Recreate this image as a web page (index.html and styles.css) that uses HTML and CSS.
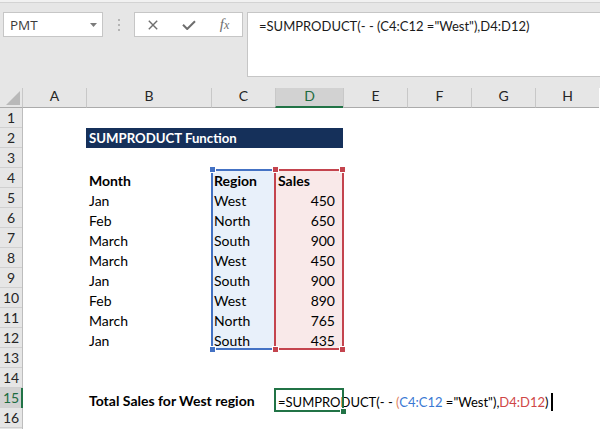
FILE: index.html
```html
<!DOCTYPE html>
<html>
<head>
<meta charset="utf-8">
<link rel="stylesheet" href="styles.css">
</head>
<body>
<div class="app">
  <div class="toolbar">
    <div class="namebox">
      <span class="nb-text">PMT</span>
      <svg class="nb-arrow" width="7" height="4" viewBox="0 0 7 4"><path d="M0 0h7L3.5 4z" fill="#7b7b7b"/></svg>
    </div>
    <div class="grip"><i></i><i></i><i></i></div>
    <div class="fxbox">
      <span class="slot s1"><svg width="10" height="10" viewBox="0 0 10 10"><path d="M0.8 0.8L9.2 9.2M9.2 0.8L0.8 9.2" stroke="#6e6e6e" stroke-width="1.4" fill="none"/></svg></span>
      <span class="slot s2"><svg width="14" height="10" viewBox="0 0 14 10"><path d="M1 4.8l4.2 4.2L13 1.2" fill="none" stroke="#6e6e6e" stroke-width="2"/></svg></span>
      <span class="slot s3"><span class="fx">f<small>x</small></span></span>
    </div>
    <div class="formula">=SUMPRODUCT(- - (C4:C12 ="West"),D4:D12)</div>
  </div>

  <div class="sheet">
    <div class="hdr">
      <div class="corner"><svg width="14" height="14" viewBox="0 0 14 14"><path d="M14 0V14H0z" fill="#b9b9b9"/></svg></div>
      <div>A</div><div>B</div><div>C</div><div class="sel">D</div><div>E</div><div>F</div><div>G</div><div>H</div>
    </div>

    <div class="range rb"><span class="hd tl"></span><span class="hd bl"></span></div>
    <div class="range rr"><span class="hd tl"></span><span class="hd tr"></span><span class="hd bl"></span><span class="hd br"></span></div>

    <div class="row"><div class="rh">1</div></div>
    <div class="row"><div class="rh">2</div><div class="cell title">SUMPRODUCT Function</div></div>
    <div class="row"><div class="rh">3</div></div>
    <div class="row"><div class="rh">4</div><div class="cell b bold">Month</div><div class="cell c bold">Region</div><div class="cell d bold">Sales</div></div>
    <div class="row"><div class="rh">5</div><div class="cell b">Jan</div><div class="cell c">West</div><div class="cell d num">450</div></div>
    <div class="row"><div class="rh">6</div><div class="cell b">Feb</div><div class="cell c">North</div><div class="cell d num">650</div></div>
    <div class="row"><div class="rh">7</div><div class="cell b">March</div><div class="cell c">South</div><div class="cell d num">900</div></div>
    <div class="row"><div class="rh">8</div><div class="cell b">March</div><div class="cell c">West</div><div class="cell d num">450</div></div>
    <div class="row"><div class="rh">9</div><div class="cell b">Jan</div><div class="cell c">South</div><div class="cell d num">900</div></div>
    <div class="row"><div class="rh">10</div><div class="cell b">Feb</div><div class="cell c">West</div><div class="cell d num">890</div></div>
    <div class="row"><div class="rh">11</div><div class="cell b">March</div><div class="cell c">North</div><div class="cell d num">765</div></div>
    <div class="row"><div class="rh">12</div><div class="cell b">Jan</div><div class="cell c">South</div><div class="cell d num">435</div></div>
    <div class="row"><div class="rh">13</div></div>
    <div class="row"><div class="rh">14</div></div>
    <div class="row"><div class="rh sel">15</div><div class="cell b bold">Total Sales for West region</div><div class="cell d active">=SUMPRODUCT(- - <span class="pk">(</span><span class="rf1">C4:C12</span> ="West"),<span class="rf2">D4:D12</span>)<span class="caret"></span></div></div>
    <div class="row"><div class="rh">16</div></div>
    <div class="row"><div class="rh"></div></div>
  </div>
</div>
</body>
</html>
```

FILE: styles.css
```css
* { box-sizing: border-box; }

body {
  margin: 0;
  width: 600px;
  height: 429px;
  overflow: hidden;
  background: #e6e6e6;
  font-family: Lato, "Liberation Sans", sans-serif;
}

.toolbar {
  height: 88px;
  display: flex;
  align-items: flex-start;
  padding: 12px 0 0 3px;
  background: linear-gradient(#f1f1f1 0 2px, #d3d3d3 2px 3px, #e6e6e6 3px);
}

.namebox {
  width: 100px;
  height: 25px;
  background: #fff;
  border: 1px solid #c6c6c6;
  display: flex;
  align-items: center;
  padding: 0 5px 0 6px;
  font: 13.5px "Open Sans", sans-serif;
  color: #3b3b3b;
}

.nb-arrow { margin-left: auto; }

.grip {
  width: 31px;
  height: 25px;
  display: flex;
  flex-direction: column;
  align-items: center;
  justify-content: center;
  gap: 3px;
}

.grip i {
  display: block;
  width: 2px;
  height: 2px;
  background: #b4b4b4;
}

.fxbox {
  width: 109px;
  height: 25px;
  background: #fff;
  border: 1px solid #c6c6c6;
  display: flex;
}

.slot {
  display: flex;
  align-items: center;
  justify-content: center;
}

.s1, .s2 { width: 36px; }
.s3 { flex: 1; }

.fx {
  font: italic 15px "Liberation Serif", serif;
  color: #6e6e6e;
  line-height: 1;
}

.fx small { font-size: 12px; }

.formula {
  margin-left: 4px;
  flex: 1;
  height: 65px;
  background: #fff;
  border: 1px solid #c6c6c6;
  border-right: 0;
  padding: 3px 0 0 11px;
  font-size: 13px;
  line-height: 20px;
  color: #1a1a1a;
  white-space: nowrap;
}

.sheet {
  position: relative;
  background: #fff;
  height: 341px;
}

.hdr, .row {
  display: grid;
  grid-template-columns: 22px 64px 125px 64px 68px 64px 64px 64px 64px;
  height: 20px;
}

.row {
  position: relative;
  z-index: 1;
}

.hdr > div {
  background: #e6e6e6;
  border-left: 1px solid #c8c8c8;
  border-bottom: 1px solid #ababab;
  text-align: center;
  font-size: 14px;
  line-height: 15px;
  color: #262626;
}

.hdr > .corner {
  border-left: 0;
  display: flex;
  align-items: flex-end;
  justify-content: flex-end;
  padding: 0 2px 2px 0;
}

.hdr > .sel {
  background: #d2d2d2;
  border-bottom: 2px solid #217346;
  color: #1d6b40;
}

.rh {
  grid-column: 1;
  background: #e6e6e6;
  border-bottom: 1px solid #d0d0d0;
  box-shadow: 1px 0 0 #bdbdbd;
  text-align: center;
  font-size: 14px;
  line-height: 19px;
  color: #262626;
}

.rh.sel {
  background: #d2d2d2;
  color: #1d6b40;
  box-shadow: inset -1px 0 0 #217346, 1px 0 0 #217346;
}

.cell {
  padding: 5px 3px 0;
  font-size: 14px;
  line-height: 15px;
  color: #000;
  white-space: nowrap;
}

.bold { font-weight: 700; }
.b { grid-column: 3; }
.c { grid-column: 4; }
.d { grid-column: 5; }

.num {
  text-align: right;
  padding-right: 8px;
}

.title {
  grid-column: 3 / 6;
  background: #15305a;
  color: #fff;
  font-weight: 700;
  font-size: 13.2px;
  padding-top: 3px;
}

.range {
  position: absolute;
  z-index: 0;
  top: 81px;
  height: 181px;
  border: 2px solid;
}

.rb {
  left: 211px;
  width: 63px;
  border-color: #4472c4;
  border-right: 0;
  background: #e8f0fa;
}

.rr {
  left: 274px;
  width: 70px;
  border-color: #c4444e;
  background: #f9e9e9;
}

.hd {
  position: absolute;
  width: 5px;
  height: 5px;
  box-shadow: 0 0 0 1px #fff;
}

.rb .hd { background: #4472c4; }
.rr .hd { background: #c4444e; }

.tl { left: -3px; top: -4px; }
.bl { left: -3px; bottom: -4px; }
.tr { right: -3px; top: -4px; }
.br { right: -3px; bottom: -4px; }

.active {
  position: relative;
  font-size: 13px;
}

.active::before {
  content: "";
  position: absolute;
  left: -1px;
  right: -1px;
  top: 0;
  bottom: -1px;
  border: 2px solid #217346;
}

.active::after {
  content: "";
  position: absolute;
  right: -3px;
  bottom: -3px;
  width: 5px;
  height: 5px;
  background: #217346;
  box-shadow: 0 0 0 1px #fff;
}

.pk { color: #e0855f; }
.rf1 { color: #3a78d4; }
.rf2 { color: #cf4646; }

.caret {
  display: inline-block;
  width: 2px;
  height: 18px;
  margin-left: 2px;
  background: #000;
  vertical-align: -4px;
}
```
